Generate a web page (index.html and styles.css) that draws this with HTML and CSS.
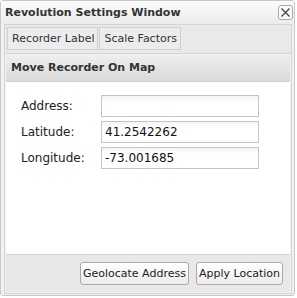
FILE: index.html
```html
<!DOCTYPE html>
<html lang="en">
<head>
    <meta charset="UTF-8">
    <title>Revolution Settings Window</title>
    <link rel="stylesheet" href="styles.css">
</head>
<body>
    <div class="window">
        <div class="title-bar">
            <span class="title">Revolution Settings Window</span>
            <span class="close-btn">
                <svg width="11" height="11" viewBox="0 0 11 11"><path d="M1.5 1.5 L9.5 9.5 M9.5 1.5 L1.5 9.5" stroke="#444" stroke-width="1.3"/></svg>
            </span>
        </div>

        <div class="tab-bar">
            <div class="tab">Recorder Label</div>
            <div class="tab">Scale Factors</div>
        </div>

        <div class="panel">
            <div class="panel-header">Move Recorder On Map</div>
            <div class="panel-body">
                <div class="form-row">
                    <label>Address:</label>
                    <input type="text" value="">
                </div>
                <div class="form-row">
                    <label>Latitude:</label>
                    <input type="text" value="41.2542262">
                </div>
                <div class="form-row">
                    <label>Longitude:</label>
                    <input type="text" value="-73.001685">
                </div>
            </div>
            <div class="panel-footer">
                <button>Geolocate Address</button>
                <button>Apply Location</button>
            </div>
        </div>
    </div>
</body>
</html>
```

FILE: styles.css
```css
body {
    margin: 0;
    background: #ffffff;
    font-family: 'DejaVu Sans', sans-serif;
    font-size: 11px;
    color: #222;
}
.window {
    width: 295px;
    height: 296px;
    box-sizing: border-box;
    border: 1px solid #c8c8c8;
    border-radius: 3px;
    background: #f2f2f2;
    display: flex;
    flex-direction: column;
}
.title-bar {
    height: 23px;
    flex-shrink: 0;
    display: flex;
    align-items: center;
    justify-content: space-between;
    padding: 0 1px 0 4px;
    background: linear-gradient(#fbfbfb, #ececec);
}
.title {
    font-weight: bold;
    color: #333;
}
.close-btn {
    width: 15px;
    height: 15px;
    box-sizing: border-box;
    border: 1px solid #a8a8a8;
    border-radius: 3px;
    background: #fafafa;
    display: flex;
    align-items: center;
    justify-content: center;
}
.tab-bar {
    flex-shrink: 0;
    margin: 0 2px 0 3px;
    padding: 2px 2px 3px 2px;
    display: flex;
    gap: 1px;
    border: 1px solid #d4d4d4;
    border-bottom: none;
    background: #e9e9e9;
}
.tab {
    height: 23px;
    line-height: 21px;
    box-sizing: border-box;
    padding: 0 3px 0 4px;
    border: 1px solid #d0d0d0;
    background: #ececec;
    color: #333;
}
.panel {
    flex: 1;
    margin: 0 2px 1px 3px;
    padding: 1px;
    border: 1px solid #d4d4d4;
    display: flex;
    flex-direction: column;
}
.panel-header {
    height: 26px;
    line-height: 26px;
    padding-left: 5px;
    font-weight: bold;
    color: #333;
    background: linear-gradient(#efefef, #d9d9d9);
    border-bottom: 1px solid #d0d0d0;
}
.panel-body {
    flex: 1;
    background: #fff;
    padding: 13px 0 0 15px;
    border-bottom: 1px solid #d0d0d0;
    font-size: 12px;
}
.form-row {
    display: flex;
    align-items: center;
    margin-bottom: 4px;
}
.form-row label {
    width: 80px;
    color: #222;
}
.form-row input {
    width: 158px;
    height: 22px;
    box-sizing: border-box;
    border: 1px solid #c4c4c4;
    padding: 2px 3px;
    font-family: 'DejaVu Sans', sans-serif;
    font-size: 12px;
    color: #111;
    background: linear-gradient(#f4f4f4, #ffffff 6px);
}
.panel-footer {
    height: 37px;
    display: flex;
    justify-content: flex-end;
    align-items: center;
    gap: 7px;
    padding-right: 7px;
    background: #e8e8e8;
}
.panel-footer button {
    height: 23px;
    padding: 0 2px;
    font-family: 'DejaVu Sans', sans-serif;
    font-size: 11px;
    color: #222;
    border: 1px solid #aaa;
    border-radius: 3px;
    background: linear-gradient(#ffffff, #ececec);
}
```
